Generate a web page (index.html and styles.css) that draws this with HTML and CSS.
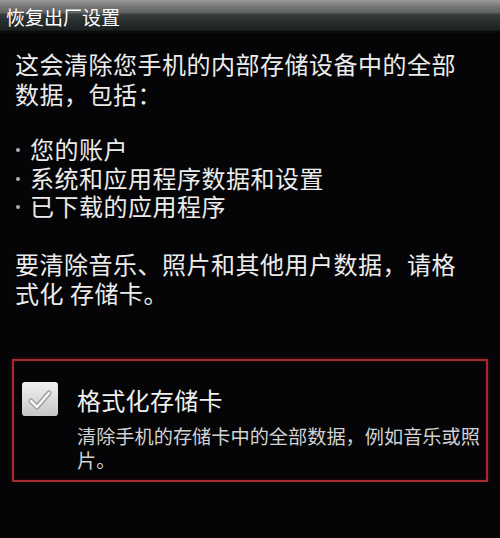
FILE: index.html
```html
<!DOCTYPE html>
<html lang="zh-CN">
<head>
    <meta charset="UTF-8">
    <meta name="viewport" content="width=device-width, initial-scale=1.0">
    <title>恢复出厂设置</title>
    <link rel="stylesheet" href="styles.css">
</head>
<body>
    <div class="title-bar">恢复出厂设置</div>

    <div class="content">
        <p class="intro">这会清除您手机的内部存储设备中的全部数据，包括：</p>

        <ul class="item-list">
            <li>您的账户</li>
            <li>系统和应用程序数据和设置</li>
            <li>已下载的应用程序</li>
        </ul>

        <p class="note">要清除音乐、照片和其他用户数据，请格式化 存储卡。</p>
    </div>

    <div class="option">
        <div class="checkbox">
            <svg width="36" height="34" viewBox="0 0 36 34">
                <polyline points="9,19 15,25 27,11" fill="none" stroke="#9a9a9a" stroke-width="5" stroke-linecap="round" stroke-linejoin="round"/>
                <polyline points="9,19 15,25 27,11" fill="none" stroke="#f4f4f4" stroke-width="2.6" stroke-linecap="round" stroke-linejoin="round"/>
            </svg>
        </div>
        <div class="option-text">
            <div class="option-title">格式化存储卡</div>
            <div class="option-desc">清除手机的存储卡中的全部数据，例如音乐或照片。</div>
        </div>
    </div>
</body>
</html>
```

FILE: styles.css
```css
body {
    margin: 0;
    background-color: #050507;
    color: #ececec;
    font-family: "Noto Sans CJK SC", "Noto Sans", sans-serif;
}

.title-bar {
    height: 30px;
    padding: 1px 0 0 6px;
    border-bottom: 2px solid #0a0b0b;
    font-size: 19px;
    line-height: 31px;
    color: #ffffff;
    background: linear-gradient(to bottom, #9a9a9a 0px, #7a7a7a 6px, #5e5f5f 13px, #3a3f3f 14px, #2a2f2f 20px, #1c2020 30px, #111 31px);
}

.content {
    padding: 16px 30px 0 15px;
    font-size: 24px;
    letter-spacing: 0.5px;
}

.intro {
    margin: 0;
    line-height: 30px;
}

.item-list {
    list-style: none;
    margin: 26px 0 0 0;
    padding: 0;
    line-height: 28.5px;
}

.item-list li {
    position: relative;
    padding-left: 15px;
}

.item-list li::before {
    content: "";
    position: absolute;
    left: 1px;
    top: 13px;
    width: 4px;
    height: 4px;
    border-radius: 50%;
    background-color: #b0b0b0;
}

.note {
    margin: 28px 0 0 0;
    line-height: 29px;
}

.option {
    display: flex;
    align-items: flex-start;
    margin: 52px 12px 0 12px;
    padding: 21px 0 8px 8px;
    border: 2px solid #a2292e;
    box-shadow: 0 0 3px rgba(200, 40, 50, 0.5), inset 0 0 2px rgba(200, 40, 50, 0.4);
}

.checkbox {
    width: 36px;
    height: 34px;
    flex-shrink: 0;
    border-radius: 3px;
    background: linear-gradient(to bottom, #f2f2f2, #c6c6c6);
}

.checkbox svg {
    display: block;
}

.option-text {
    margin-left: 19px;
}

.option-title {
    margin-top: 2px;
    font-size: 24px;
    line-height: 32px;
    letter-spacing: 0.3px;
    color: #f0f0f0;
}

.option-desc {
    margin-top: 8px;
    font-size: 19.2px;
    line-height: 24px;
    color: #d2d2d2;
}
```
